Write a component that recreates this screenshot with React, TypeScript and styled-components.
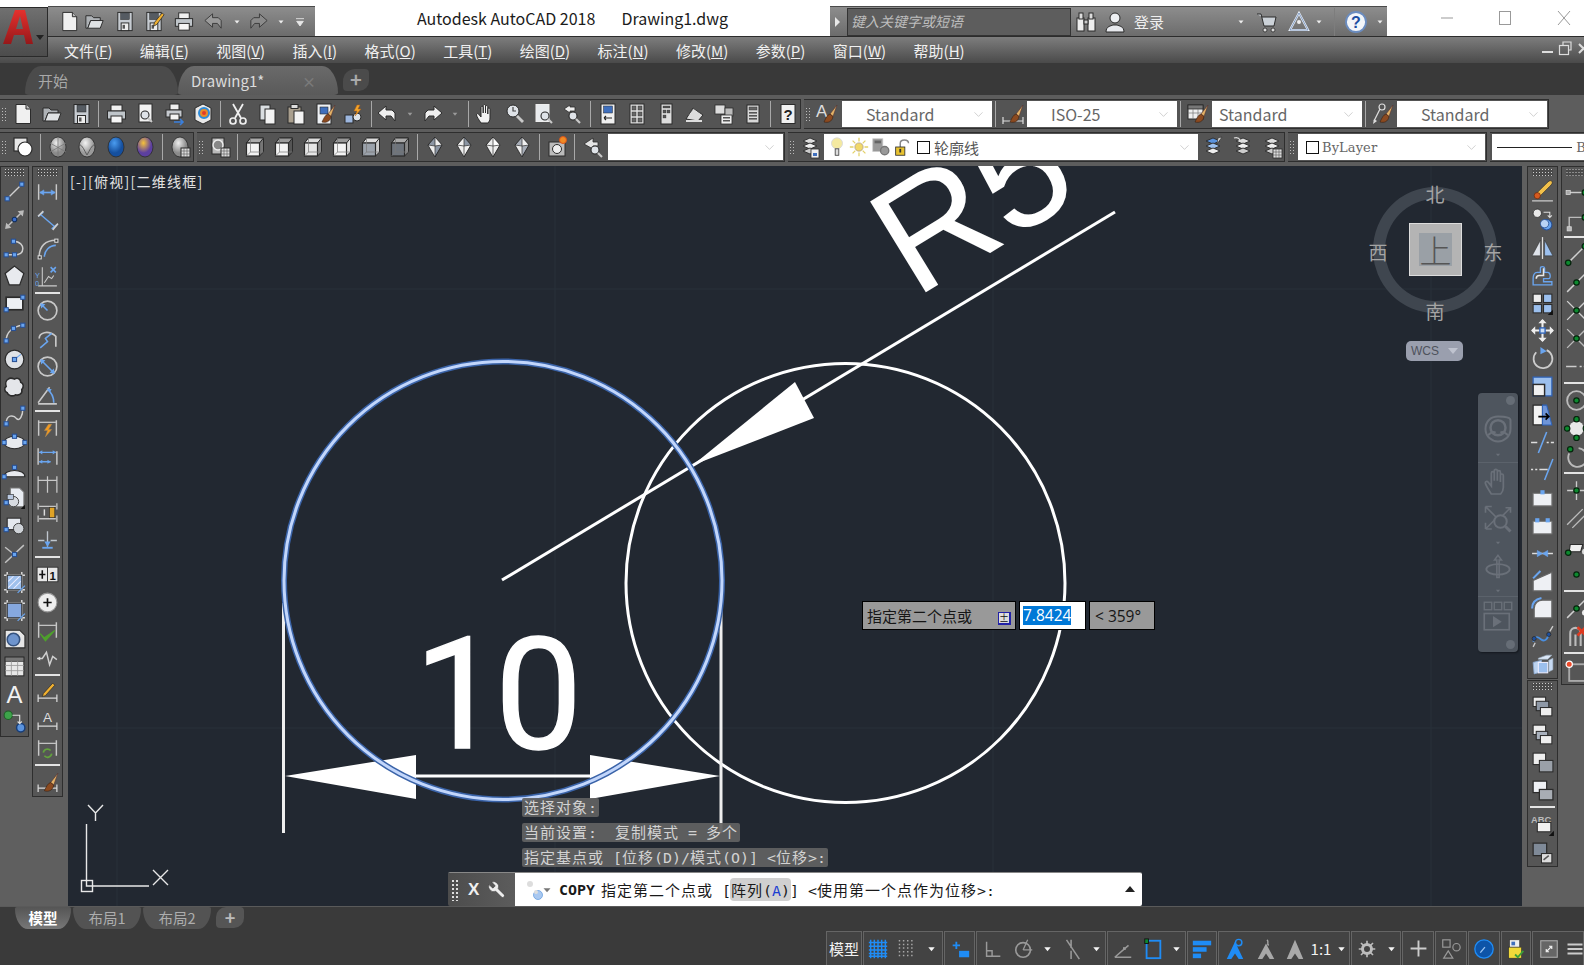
import React from 'react';
import styled, { createGlobalStyle } from 'styled-components';
import { ChevronDown } from 'lucide-react';

const Global = createGlobalStyle`
  html, body { margin: 0; padding: 0; background: #3a3a3a; }
  * { box-sizing: border-box; }
  body { font-family: "Noto Sans CJK SC", "Noto Sans", sans-serif; }
`;

const W = '#e8e8e8', G = '#b9b9b9', K = '#2b2b2b', B = '#6aa5ef', BD = '#2f63b8', S = '#1f8cf5';
const p = (d: string, f = 'none', s = W, w = 1.5) => <path d={d} fill={f} stroke={s} strokeWidth={w} />;
const c = (x: number, y: number, r: number, f = 'none', s = W, w = 1.5) => <circle cx={x} cy={y} r={r} fill={f} stroke={s} strokeWidth={w} />;
const r = (x: number, y: number, wd: number, h: number, f = 'none', s = W, w = 1) => <rect x={x} y={y} width={wd} height={h} fill={f} stroke={s} strokeWidth={w} />;
const n = (x: number, y: number) => r(x - 2, y - 2, 4, 4, B, '#274f94', 1);
const sn = (x: number, y: number) => c(x, y, 2.6, '#0c8a2e', '#06240d', 1.2);
const brush = <>{p('M22 3l-7 9 3 2.5z', '#e3b267', '#533', .6)}{p('M15 12c-3 1-4 4-6 8 4 1 8 0 9-5.5z', '#8b4a20', '#3a2010', .6)}</>;
const page = (x = 5, y = 3, wd = 14, h = 18) => r(x, y, wd, h, '#f1f1f1', K, 1);
const glass = (x: number, y: number) => <>{c(x, y, 4, '#dfe3e8', K, 1.1)}{p(`M${x + 3} ${y + 3}l4 4`, 'none', '#c9c9c9', 2.2)}</>;
const floppy = <>{r(5, 2.5, 15, 19, '#c7ccd2', K, 1)}{r(8, 3, 9, 7, '#555b62', K, .5)}{r(8.5, 13.5, 8, 8, '#ededed', K, 1)}{r(10, 15.5, 2.5, 4, '#555', 'none', 0)}</>;
const printer = <>{r(7, 3, 11, 6, '#f0f0f0', K, 1)}{r(3.5, 9, 18, 8, '#bfc5ca', K, 1)}{r(7, 14, 11, 7, '#f6f6f6', K, 1)}</>;
const stack = <>{p('M5 6l7-3 7 3-7 3z', '#ddd', K, .9)}{p('M5 11l7-3 7 3-7 3z', '#eee', K, .9)}{p('M5 16l7-3 7 3-7 3z', '#ccc', K, .9)}</>;
const cube = (front: string, side: string, top: string) => <>{p('M3.5 8l4-5h13v14l-4 4z', side, K, 1)}{p('M3.5 8l4-5h13l-4 5z', top, K, 1)}{r(3.5, 8, 13, 13, front, K, 1.2)}{p('M7.5 3v14h13M3.5 21l4-4', 'none', '#777', .7)}</>;
const dia = (a: string, b: string) => <>{p('M12 2l7 8-7 12-7-12z', a, K, 1)}{p('M12 2v9l7-1z', b, K, .7)}{p('M5 10l7 1v11z', b === a ? '#aaa' : '#eee', K, .7)}</>;
const sph = (a: string, b: string) => <><radialGradient id={`s${a.slice(1)}`} cx=".4" cy=".3"><stop offset="0" stopColor={a} /><stop offset="1" stopColor={b} /></radialGradient><ellipse cx="12" cy="12" rx="8" ry="10" fill={`url(#s${a.slice(1)})`} stroke={K} strokeWidth=".8" /></>;
const dExt = p('M3.5 4v15M20.5 4v15', 'none', '#c8c8c8', 1.4);
const dLine = <>{p('M5 12h14', 'none', B, 1.6)}{p('M4.5 12l4-2.5v5zM19.5 12l-4-2.5v5z', B, B, .5)}</>;
const dimBase = p('M3 14v7M21 14v7M3 17.5h18', 'none', '#d8d8d8', 1.2);
const hand = <>{p('M7 21c-2-3-4-6-4.5-8-.3-1.3 1.3-2 2.2-.8L7 15V5.5c0-1.6 2.2-1.6 2.2 0V11V3.7c0-1.6 2.3-1.6 2.3 0V11V4.7c0-1.6 2.3-1.6 2.3 0V12V7.2c0-1.6 2.2-1.6 2.2 0V16c0 2-1 4-2 5z', '#f2f2f2', K, 1)}</>;
const snapLine = p('M3 21L21 3', 'none', '#d0d0d0', 1.4);
const snapX = p('M3 3l18 18M3 21L21 3', 'none', '#d0d0d0', 1.3);

const I: Record<string, React.ReactElement> = {
  new: <>{p('M5 2.5h10l4.5 4.5v14.5H5z', '#f0f0f0', K, 1)}{p('M15 2.5V7h4.5', '#bbb', K, 1)}</>,
  open: <>{p('M3 6h6l2 2h7v3H8l-3 8H3z', '#aeb2b6', K, 1)}{p('M8 11h13l-3 8H5z', '#dfe2e4', K, 1)}</>,
  save: floppy,
  saveas: <>{floppy}{p('M21 3l-8 10-1 4 3.5-2 7.5-10z', '#f0b030', K, .8)}</>,
  print: printer,
  preview: <>{page(6, 2, 13, 18)}{glass(12, 13)}</>,
  plot: <>{r(8, 2, 9, 6, '#eee', K, 1)}{r(4, 8, 16, 7, '#c5c9ce', K, 1)}{r(8, 12, 9, 6, '#f4f4f4', K, 1)}{p('M12 20h9M18 17l3 3-3 3', 'none', '#3a7fdc', 1.6)}</>,
  pub3d: <>{p('M12 2l8 4v12l-8 4-8-4V6z', '#e8e8e8', K, 1)}{c(13, 11, 5, '#e88a2a', '#2d8bd9', 2)}{c(13, 11, 2, '#e23b2a', 'none', 0)}</>,
  cut: <>{p('M7 2l8 14M17 2L9 16', 'none', '#f0f0f0', 1.8)}{c(7, 19, 3, 'none', '#eee', 1.7)}{c(17, 19, 3, 'none', '#eee', 1.7)}</>,
  copy: <>{r(5, 3, 10, 15, '#d9dde0', K, 1)}{r(10, 7, 10, 15, '#f3f3f3', K, 1)}</>,
  paste: <>{r(4, 5, 13, 16, '#a99f8e', K, 1)}{r(7, 2.5, 7, 4, '#ddd', K, 1)}{r(10, 9, 10, 13, '#f3f3f3', K, 1)}</>,
  match: <>{r(4, 2, 14, 20, '#eef1f5', K, 1)}{r(7, 5, 8, 7, '#3f6fbd', K, .6)}{brush}</>,
  block: <>{r(3, 13, 8, 8, '#9db7df', K, 1)}{c(15, 15, 4, '#dfe3e8', K, 1)}{p('M15 3l-3 6h3l-2 5 6-7h-3l2-4z', '#f4a52a', '#b25f10', .5)}</>,
  undo: <>{p('M11 4L3 11l8 7v-4h5l4 5v-8l-3-3h-6z', '#eee', K, 1)}</>,
  redo: <>{p('M13 4l8 7-8 7v-4H8l-4 5v-8l3-3h6z', '#eee', K, 1)}</>,
  undod: <>{p('M11 4L3 11l8 7v-4h5l4 5v-8l-3-3h-6z', '#9a9a9a', '#3b3b3b', 1)}</>,
  redod: <>{p('M13 4l8 7-8 7v-4H8l-4 5v-8l3-3h6z', '#8a8a8a', '#3b3b3b', 1)}</>,
  dd: <>{p('M8 10h8l-4 5z', '#9a9a9a', 'none', 0)}</>,
  ddl: <>{p('M7 9h10l-5 6z', '#eeeeee', 'none', 0)}</>,
  ddk: <>{p('M6 9h12l-6 7z', '#777', 'none', 0)}</>,
  ddw: <>{p('M5 9h14l-7 9z', '#f5f5f5', 'none', 0)}</>,
  qmenu: <>{p('M6 7h12M7 11h10l-5 7z', '#e8e8e8', '#e8e8e8', 1.3)}</>,
  hand,
  zrt: <>{c(10, 9, 6, '#dfe3e8', K, 1)}{p('M10 5v4h3', 'none', '#444', 1.2)}{p('M14 14l6 6', 'none', '#c9c9c9', 2.8)}</>,
  zwin: <>{r(4, 2.5, 13, 17, '#e8ebee', '#eee', 1)}{glass(13, 14)}</>,
  zprev: <>{p('M9 3L3 7l6 4V9h5V5H9z', '#eee', K, .8)}{glass(12, 14)}</>,
  palette: <>{r(5, 2, 14, 20, '#f0f0f0', K, 1)}{r(7.5, 4, 9, 7, '#3f6fbd', K, .5)}{p('M8 16h8M8 16l2-2M8 16l2 2', 'none', '#222', 1.1)}</>,
  dc: <>{r(5, 2, 14, 20, '#ddd', K, 1)}{r(7, 4, 4, 4, '#666', K, .4)}{r(13, 4, 4, 4, '#666', K, .4)}{r(7, 10, 4, 4, '#666', K, .4)}{r(13, 10, 4, 4, '#666', K, .4)}{r(7, 16, 4, 4, '#666', K, .4)}{r(13, 16, 4, 4, '#666', K, .4)}</>,
  tp: <>{r(7, 2, 11, 20, '#ddd', K, 1)}{r(9, 4, 7, 2, '#555', K, .3)}{r(9, 8, 3, 3, '#555', K, .3)}{r(9, 13, 3, 3, '#555', K, .3)}{r(13, 8, 3, 3, '#555', K, .3)}</>,
  sheet: <>{p('M3 17l7-11 10 7-5 6z', '#ddd', K, 1)}{p('M5 13l6-7 6 5', 'none', '#555', .8)}{p('M3 19h16', 'none', '#ddd', 2)}</>,
  markup: <>{r(3, 3, 10, 9, '#ddd', K, .8)}{r(13, 6, 8, 8, '#bbb', K, .8)}{r(9, 13, 11, 9, '#eee', K, .8)}{r(11, 15, 7, 1.5, '#555', 'none', 0)}{r(11, 18, 7, 1.5, '#555', 'none', 0)}</>,
  calc: <>{r(6, 3, 12, 18, '#d8d8d8', K, 1)}{r(8, 5, 8, 3, '#666', K, .4)}{r(8, 10, 8, 1.6, '#555', 'none', 0)}{r(8, 13, 8, 1.6, '#555', 'none', 0)}{r(8, 16, 8, 1.6, '#555', 'none', 0)}</>,
  help: <>{r(5, 2.5, 14, 19, '#f0f0f0', K, 1)}<text x="12" y="18" textAnchor="middle" fontFamily="Liberation Sans" fontWeight="700" fontSize="15" fill="#222">?</text></>,
  area: <>{r(3, 3, 13, 13, '#e8e8e8', K, 1.2)}{c(14, 14, 7, '#fff', K, 1.2)}</>,
  hide: <>{sph('#eeeeee', '#8a8a8a')}{p('M4 8l16 9M20 8L4 17M12 2v20', 'none', '#777', .8)}</>,
  shade: <>{sph('#f2f2f2', '#9a9a9a')}{p('M4 9c4 2 5 6 8 11M20 9c-4 2-5 6-8 11', 'none', '#555', .9)}</>,
  sblue: sph('#4a9cf0', '#154f9e'),
  sgold: <>{sph('#f6c23a', '#5c3fa0')}</>,
  smat: <>{sph('#eeeeee', '#777777')}{r(13, 13, 9, 9, '#ddd', K, 1)}{p('M13 16h9M13 19h9M16 13v9M19 13v9', 'none', '#555', .6)}</>,
  vmat: <>{r(4, 3, 12, 16, '#bbb', K, 1)}{c(10, 10, 5, '#888', '#eee', 1.4)}{r(13, 13, 9, 9, '#ddd', K, 1)}{p('M13 16h9M13 19h9M16 13v9M19 13v9', 'none', '#555', .6)}</>,
  c1: cube('#f3f3f3', '#777', '#aaa'),
  c2: cube('#f3f3f3', '#555', '#999'),
  c3: cube('#e6e6e6', '#888', '#ddd'),
  c4: cube('#f3f3f3', '#ddd', '#999'),
  c5: cube('#9ba2ab', '#ccc', '#ddd'),
  c6: cube('#6e747c', '#888', '#aaa'),
  d1: dia('#8b95a3', '#eeeeee'),
  d2: dia('#f0f0f0', '#8b95a3'),
  d3: dia('#eeeeee', '#ffffff'),
  d4: dia('#a8aeb8', '#f0f0f0'),
  cam: <>{r(4, 7, 16, 14, '#bbb', K, 1)}{c(12, 14, 4.5, '#eee', K, 1)}{c(18, 5, 3.5, '#f08a24', '#d9541a', 1)}</>,
  prevv: <>{p('M12 3L3 9l9 5v-3h5V7h-5z', '#e4e4e4', K, .8)}{glass(14, 15)}</>,
  styA: <><text x="1" y="15" fontFamily="Liberation Sans" fontSize="17" fill="#ddd">A</text>{brush}</>,
  styD: <>{p('M2 15v7M22 15v7M2 19h20', 'none', '#ddd', 1.2)}{brush}</>,
  styT: <>{r(2, 3, 15, 14, '#eee', K, 1)}{r(2, 3, 15, 4, '#777', K, .8)}{p('M2 11h15M7 7v10M12 7v10', 'none', '#777', .7)}{brush}</>,
  styM: <>{c(11, 5, 3, 'none', '#ddd', 1.2)}{p('M9 7L3 19', 'none', '#ddd', 1.3)}{p('M2 22l1-5 3 2z', '#ddd', 'none', 0)}{brush}</>,
  layP: <>{stack}{r(13, 14, 8, 9, '#eee', K, .8)}{r(15, 18, 4, 3, '#3f6fbd', 'none', 0)}</>,
  layC: <>{p('M5 6l7-3 7 3-7 3z', '#5b93dd', K, .9)}{p('M5 11l7-3 7 3-7 3z', '#9cc0ee', K, .9)}{p('M5 16l7-3 7 3-7 3z', '#eee', K, .9)}{p('M17 3l4-1-5 7z', '#ddd', K, .6)}</>,
  layU: <>{stack}{p('M3 3c3-1 5 0 6 2', 'none', '#ddd', 1.3)}</>,
  layS: <>{stack}{r(13, 14, 9, 9, '#ddd', K, .8)}{p('M13 17h9M13 20h9M16 14v9M19 14v9', 'none', '#555', .6)}</>,
  bulb: <>{c(12, 8, 6, '#f4e9a0', '#d8d8d8', 1)}{r(10, 14, 4, 7, '#ddd', K, .8)}</>,
  sun: <>{c(12, 12, 4.5, '#f1d86a', '#a98', .8)}{p('M12 2v4M12 18v4M2 12h4M18 12h4M5 5l3 3M16 16l3 3M19 5l-3 3M8 16l-3 3', 'none', '#e4d26a', 1.4)}</>,
  vpf: <>{r(3, 3, 11, 14, '#999', '#ccc', .8)}{r(5, 5, 7, 3, '#666', 'none', 0)}{c(16, 16, 4.5, '#999', '#777', 1.5)}</>,
  lock: <>{p('M9 12V8c0-5 9-5 9 0', 'none', '#888', 1.6)}{r(4, 12, 10, 9, '#e8c230', K, .9)}{r(8, 14, 2, 4, '#333', 'none', 0)}</>,
  line: <>{p('M5 19L19 5', 'none', '#d0d0d0', 1.3)}{n(5, 19)}{n(19, 5)}</>,
  xline: <>{p('M4 20L20 4', 'none', '#c2c2c2', 1.4)}{p('M3 21l1-6 5 5zM21 3l-6 1 5 5z', '#bbb', 'none', 0)}{c(12, 12, 2.2, '#3c6fd0', '#12305f', 1)}</>,
  pline: <>{p('M4 19h8c7 0 8-4 8-6s-2-7-9-7', 'none', '#d0d0d0', 1.4)}{n(4, 19)}{n(12, 19)}{n(11, 6)}</>,
  polygon: <>{p('M12 3l9 7-4 11H7L3 10z', '#e8eaee', K, 1.2)}</>,
  rect: <>{r(4, 6, 16, 12, '#eef0f4', K, 1.6)}{n(4, 18)}{n(20, 6)}</>,
  arc: <>{p('M4 21c0-9 7-14 16-15', 'none', '#d0d0d0', 1.4)}{n(4, 21)}{n(11, 9)}{n(20, 6)}</>,
  circle: <>{c(12, 12, 9, '#dfe2e6', K, 1.2)}{p('M12 12l6-5', 'none', B, 1)}{n(12, 12)}</>,
  cloud: <>{p('M6 4c2-2 4-1 6 0 3-2 6 0 6 3 3 1 3 5 1 7 1 4-3 6-6 5-3 2-7 1-8-2-3-1-3-5-1-6-1-3 0-6 2-7z', '#e4e6ea', K, 1.5)}</>,
  spline: <>{p('M4 20c0-9 7-9 10-5 3 3 6-3 6-10', 'none', '#d0d0d0', 1.4)}{n(4, 20)}{n(20, 5)}</>,
  ell: <><ellipse cx="12" cy="12" rx="10" ry="6" fill="#e8eaee" stroke={K} />{n(2, 12)}{n(22, 12)}{n(12, 6)}</>,
  ella: <><path d="M2 18c0-8 20-8 20 0z" fill="#e8eaee" stroke={K} />{n(2, 18)}{n(12, 9)}</>,
  ins: <>{p('M8 2h9l4 4v14H8z', '#e8ecf2', '#777', 1)}{c(11, 15, 5, '#d8dce2', K, .8)}{r(5, 8, 6, 5, '#b9c8e0', K, .6)}{n(4, 16)}{p('M18 22l4-4v4z', '#111', 'none', 0)}</>,
  mkblk: <>{r(5, 4, 13, 11, '#e4e8ee', K, 1)}{c(16, 14, 5, '#cfd3d8', K, .8)}{n(4, 15)}</>,
  point: <>{p('M3 20L21 3M3 5l10 8', 'none', '#c2c2c2', 1.4)}{n(12, 12)}</>,
  hatch: <>{p('M2 5h20M2 19h20M5 2v20M19 2v20', 'none', '#ddd', 1.4)}{r(5, 5, 14, 14, '#9fc0ec', K, 1)}{p('M6 11l5-5M6 17l11-11M11 18l7-7', 'none', '#eef', 1)}{p('M15 22l7-7', 'none', B, 1.2)}</>,
  grad: <>{p('M2 5h20M2 19h20M5 2v20M19 2v20', 'none', '#ddd', 1.4)}{r(5, 5, 14, 14, '#86a8de', K, 1)}{p('M15 22l7-7', 'none', B, 1.2)}</>,
  region: <>{p('M3 4h14l5 5v12H3z', '#e6e6e6', K, 1)}{c(11, 13, 6, '#6e94cd', '#35527e', 1.5)}</>,
  table: <>{r(3, 3, 18, 18, '#e8e8e8', K, 1)}{r(3, 3, 18, 4, '#777', K, .7)}{p('M3 11h18M3 16h18M9 7v14M15 7v14', 'none', '#999', .8)}</>,
  textA: <><text x="12" y="21" textAnchor="middle" fontFamily="Liberation Sans" fontSize="23" fill="#f2f2f2">A</text></>,
  addsel: <>{c(6, 6, 4, '#3da34a', '#1e5c26', 1)}{c(18, 18, 4, '#5b93dd', '#173d78', 1.4)}{p('M10 6h7v8M15 12l2 2 2-2', 'none', '#ddd', 1.1)}</>,
  dlin: <>{dExt}{dLine}</>,
  dali: <>{p('M8 4L3 8M21 16l-5 4M5 6l14 12', 'none', B, 1.4)}{p('M8 3l-5 5M22 15l-5 6', 'none', '#d0d0d0', 1.5)}</>,
  darc: <>{p('M4 20C4 10 10 4 20 4', 'none', '#c8c8c8', 1.5)}{p('M9 20c0-6 5-11 11-11', 'none', B, 1.5)}{r(3, 19, 3, 3, '#333', '#ddd', 1)}{r(19, 3, 3, 3, '#333', '#ddd', 1)}</>,
  dord: <>{p('M3 21h18M7 3v18', 'none', '#ccc', 1)}{p('M9 18l4-6 3 2 2-3', 'none', '#ccc', 1)}{p('M15 3l5 5M20 3l-5 5', 'none', B, 1.5)}<text x="0" y="13" fontFamily="Liberation Sans" fontSize="7" fill={B}>Y</text><text x="0" y="21" fontFamily="Liberation Sans" fontSize="7" fill={B}>0</text></>,
  drad: <>{c(12, 12, 9, 'none', '#c8c8c8', 1.6)}{p('M12 12L7 7', 'none', B, 1.5)}{p('M5 5l5 1-4 4z', B, 'none', 0)}</>,
  djog: <>{p('M4 12c0-5 8-9 16-2v10', 'none', '#c8c8c8', 1.6)}{p('M5 21l7-6-2-3 6-5', 'none', B, 1.5)}</>,
  ddia: <>{c(12, 12, 9, 'none', '#c8c8c8', 1.6)}{p('M6 6l12 12', 'none', B, 1.5)}{p('M5 5l5 1-4 4zM19 19l-5-1 4-4z', B, 'none', 0)}</>,
  dang: <>{p('M3 21h18M3 20L14 5', 'none', '#c8c8c8', 1.5)}{p('M12 7c4 3 6 8 6 13', 'none', B, 1.5)}{p('M11 6l5 1-2 3z', B, 'none', 0)}</>,
  dqk: <>{dExt}{p('M4 6h16', 'none', '#ddd', 1)}{p('M13 8l-4 6h3l-2 6 6-7h-3l3-5z', '#f39a1e', '#a85', .5)}</>,
  dbase: <>{p('M3 4v16M21 7v13', 'none', '#c8c8c8', 1.4)}{p('M4 8h16M4 17h11', 'none', B, 1.3)}{p('M4 8l3-2v4zM20 8l-3-2v4zM4 17l3-2v4zM15 17l-3-2v4z', B, 'none', 0)}</>,
  dcont: <>{p('M3 4v16M12 4v16M21 4v16M3 8h18', 'none', '#c8c8c8', 1.2)}</>,
  dspace: <>{p('M3 3v6M21 3v6M3 15v6M21 15v6M4 6h16M4 18h16', 'none', '#c8c8c8', 1.2)}{r(14, 7, 5, 10, '#e0a326', K, .6)}{p('M9 9v6', 'none', '#ddd', 1.4)}</>,
  dbrk: <>{p('M12 3v15M3 12h6M15 12h6', 'none', '#bfc6ce', 1.3)}{p('M7 19h10', 'none', B, 1.8)}{p('M12 18l-3-5h6z', B, 'none', 0)}</>,
  dtol: <>{r(2, 5, 20, 14, '#e6e6e6', K, .8)}{p('M12 5v14', 'none', '#333', 1)}{p('M7 8v8M4 12h6', 'none', '#111', 1.5)}<text x="14" y="17" fontFamily="Liberation Sans" fontSize="11" fontWeight="700" fill="#111">1</text></>,
  dcen: <>{c(12, 12, 9, '#eeeeee', '#999', 1)}{p('M12 8v8M8 12h8', 'none', '#111', 1.6)}</>,
  dchk: <>{dExt}{p('M4 7h16', 'none', '#ddd', 1)}{p('M5 15l4 4 10-7-9 10z', '#4ea12b', '#4ea12b', 1)}</>,
  djl: <>{p('M2 12h5l4-6 3 12 3-8 4 3', 'none', '#cfcfcf', 1.4)}{p('M2 12l3-2v4z', '#ddd', 'none', 0)}</>,
  dedit: <>{dimBase}{p('M8 13l-1 3 3-1 9-10-2-2z', '#f0b030', K, .7)}</>,
  dtxt: <>{dimBase}<text x="12" y="13" textAnchor="middle" fontFamily="Liberation Sans" fontSize="13" fill="#ddd">A</text></>,
  dup: <>{dExt}{p('M4 7h16', 'none', '#ddd', 1)}{p('M8 16a4 4 0 0 1 7-2M16 17a4 4 0 0 1-7 2', 'none', '#63a33d', 1.6)}</>,
  dsty: <>{dimBase}{brush}</>,
  erase: <>{p('M21 2c1 2 0 3-2 5L10 16l-3-3 9-9c2-2 3-3 5-2z', '#f2c04a', K, .6)}{c(7, 16, 3, '#d65a1f', '#5a2208', .6)}{p('M2 21h20', 'none', '#ccc', 1.2)}</>,
  cpy: <>{c(7, 6, 4, '#e8e8e8', K, .8)}{c(16, 17, 5, B, '#274f94', 1)}{c(14, 16, 4, '#b9d3f5', '#274f94', .8)}{p('M13 5h6v5M17 8l2 2 2-2', 'none', '#ddd', 1)}</>,
  mir: <>{p('M10 5v15H2z', '#dfe3ea', K, .5)}{p('M14 5v15h8z', '#9cc0ee', K, .5)}{p('M12 2v21', 'none', '#ddd', 1.2)}</>,
  off: <>{p('M3 21h18v-3H13v-3h5c2 0 2-6-1-6h-3V5c0-2-4-2-4 0v4H7c-3 0-4 3-4 6z', 'none', '#6aa5ef', 1.3)}{p('M6 15c0-2 1-3 3-3h4V5', 'none', '#e8e8e8', 1.5)}</>,
  arr: <>{r(3, 3, 8, 8, '#eee', K, 1)}{r(13, 3, 8, 8, '#9cc0ee', K, 1)}{r(3, 13, 8, 8, '#9cc0ee', K, 1)}{r(13, 13, 8, 8, '#9cc0ee', K, 1)}{p('M17 23l5-5v5z', '#111', 'none', 0)}</>,
  move: <>{p('M12 2v20M2 12h20', 'none', '#eee', 2)}{p('M12 1l4 4H8zM12 23l4-4H8zM1 12l4-4v8zM23 12l-4-4v8z', '#eee', 'none', 0)}{r(9.5, 9.5, 5, 5, '#cfe0f5', BD, 1.3)}</>,
  rot: <>{p('M16 4A9 9 0 1 1 6 6', 'none', '#ccc', 1.7)}{p('M10 1l6 4-6 3z', B, 'none', 0)}</>,
  scl: <>{r(3, 3, 18, 18, '#9cc0ee', BD, 1.2)}{r(3, 10, 11, 11, '#f0f0f0', K, 1.4)}</>,
  stretch: <>{p('M3 3h9v19H3z', '#f2f2f2', K, 1.2)}{p('M12 3h4l5 19h-9z', '#6f95d8', BD, 1)}{p('M8 14h10M15 11l3 3-3 3', 'none', '#000', 1.6)}</>,
  trim: <>{p('M1 12h6M16 12h2M20 12h3', 'none', '#ddd', 1.5)}{p('M8 22l8-20', 'none', B, 1.5)}</>,
  ext: <>{p('M1 12h2M5 12h2M9 12h8', 'none', '#ddd', 1.5)}{p('M14 22l8-20', 'none', B, 1.5)}</>,
  brkp: <>{r(3, 8, 18, 12, '#eef0f4', '#777', 1)}{r(10, 5, 4, 4, B, 'none', 0)}</>,
  brk: <>{r(3, 8, 18, 12, '#eef0f4', '#777', 1)}{r(5, 5, 4, 4, B, 'none', 0)}{r(15, 5, 4, 4, B, 'none', 0)}</>,
  join: <>{p('M2 12h20', 'none', '#ddd', 1.4)}{p('M7 9l5 3-5 3zM17 9l-5 3 5 3z', B, B, .5)}</>,
  chf: <>{p('M21 3v18H3V11z', '#eef0f4', '#666', 1.2)}{p('M3 9L10 2', 'none', B, 2)}</>,
  fil: <>{p('M21 4v17H4v-9c0-5 4-8 8-8z', '#eef0f4', '#666', 1.2)}{p('M2 12c0-6 4-9 9-10', 'none', B, 2)}</>,
  bld: <>{p('M3 17c3-7 5-4 8-2s6 0 7-6', 'none', '#4a8fe0', 1.8)}{c(4, 14, 2, '#1c4fa0', K, .8)}{c(18, 10, 2, '#1c4fa0', K, .8)}{p('M3 22l2-4M19 7l3-5', 'none', '#ccc', 1.3)}</>,
  expl: <>{p('M3 10l8-2v11l-7 2z', '#bcd3f0', '#8aa8d0', .8)}{r(8, 10, 9, 10, '#9cc0ee', '#eef', 1)}{p('M8 6l8-3h5l-4 4H8z', '#dbe7f7', '#9ab', .6)}{p('M18 8l4-2v11l-4 2z', '#c8dbf4', '#9ab', .6)}</>,
  s1: <>{p('M4 12h14', 'none', '#ccc', 1.4)}{r(2, 10, 4, 4, '#aaa', '#ddd', .7)}{sn(20, 12)}</>,
  s2: <>{p('M5 21v-12h13', 'none', '#bbb', 1.4)}{r(3, 18, 4, 4, '#bbb', '#ddd', .7)}{sn(20, 9)}</>,
  s3: <>{snapLine}{sn(4, 20)}{sn(20, 4)}</>,
  s4: <>{snapLine}{sn(12, 12)}</>,
  s5: <>{snapX}{sn(12, 12)}</>,
  s6: <>{p('M3 3l18 18M3 21L21 3', 'none', '#bbb', 1.3)}{sn(12, 12)}</>,
  s7: <>{p('M2 12h10M15 12h2M19 12h3', 'none', '#ccc', 1.5)}</>,
  s8: <>{c(12, 12, 9, 'none', '#bbb', 1.8)}{sn(12, 12)}</>,
  s9: <>{c(12, 12, 7, '#e8e8e8', 'none', 0)}{sn(12, 3)}{sn(3, 12)}{sn(21, 12)}{sn(12, 21)}</>,
  s10: <>{p('M14 4a9 9 0 1 1-9 5', 'none', '#bbb', 1.8)}{sn(6, 5)}</>,
  s11: <>{p('M12 3v18M3 12h18', 'none', '#ccc', 1.3)}{sn(12, 12)}</>,
  s12: <>{p('M3 18L18 3M8 21L21 8', 'none', '#bbb', 1.3)}</>,
  s13: <>{p('M6 10h12l-2 7H5z', '#eee', K, 1)}{sn(4, 18)}{c(20, 17, 2.8, '#ddd', 'none', 0)}</>,
  s14: sn(12, 12),
  s15: <>{snapLine}{sn(12, 12)}{c(20, 16, 2.8, '#eee', 'none', 0)}</>,
  s16: <>{p('M6 21V9c0-7 10-7 10 0v12M11 21V10', 'none', '#bbb', 2)}{p('M13 3l8 8M21 3l-8 8', 'none', '#e03a20', 2.6)}</>,
  s17: <>{r(5, 6, 16, 16, 'none', '#aaa', 1.8)}{c(5, 6, 3, '#ee4a2a', '#fff', 1.2)}</>,
  o1: <>{r(3, 3, 12, 9, '#eee', K, 1)}{r(6, 7, 12, 9, '#8e98a6', K, 1)}{r(10, 13, 11, 8, '#eee', K, 1)}</>,
  o2: <>{r(3, 3, 12, 9, '#eee', K, 1)}{r(6, 9, 11, 8, '#a8b0bc', K, 1)}{r(10, 13, 11, 8, '#eee', K, 1)}</>,
  o3: <>{r(3, 3, 12, 11, '#eee', K, 1)}{r(9, 10, 13, 11, '#9aa0a8', K, 1)}</>,
  o4: <>{r(3, 3, 13, 11, '#eef0f4', K, 1.2)}{r(9, 11, 13, 10, '#a8adb4', K, 1.2)}</>,
  o5: <><text x="1" y="11" fontFamily="Liberation Sans" fontSize="9" fontWeight="700" fill="#bbb">ABC</text>{r(7, 10, 13, 9, '#f0f0f0', K, 1)}{p('M18 23l5-5v5z', '#111', 'none', 0)}</>,
  o6: <>{r(3, 3, 13, 12, '#7f8a98', K, 1.2)}{r(11, 13, 10, 9, '#ddd', K, 1)}{p('M13 19l5-4', 'none', '#555', 1.5)}</>,
  gridS: <>{p('M4 2v20M8 2v20M12 2v20M16 2v20M20 2v20M2 5h20M2 9h20M2 13h20M2 17h20M2 20h20', 'none', S, 1.6)}</>,
  dots: <path d="M3 3h18M3 7h18M3 11h18M3 15h18M3 19h18" fill="none" stroke="#a8a8a8" strokeWidth="1.6" strokeDasharray="1.6 2.9" />,
  inferS: <>{p('M4 8h8M8 4v8', 'none', S, 2)}{r(11, 14, 11, 7, S, 'none', 0)}</>,
  ortho: <>{p('M5 4v16h15M5 14h6v6', 'none', '#999', 1.6)}</>,
  polar: <>{c(11, 13, 8, 'none', '#999', 1.8)}{p('M11 13l5-11M11 13h10', 'none', '#999', 1.4)}</>,
  iso: <>{p('M6 2l14 21M11 2v9M11 14v9', 'none', '#999', 1.7)}</>,
  angle: <>{p('M3 21h18M3 21L18 8', 'none', '#999', 1.7)}{r(12, 10, 3, 3, '#999', 'none', 0)}</>,
  osnap: <>{r(5, 3, 15, 19, 'none', S, 2)}{r(3, 1, 4, 5, '#0c8a2e', '#111', 1)}</>,
  lw: <>{r(2, 3, 20, 5, S, 'none', 0)}{r(2, 10, 15, 5, S, 'none', 0)}{r(2, 17, 9, 5, S, 'none', 0)}</>,
  annoS: <>{p('M12 4L3 23h5l4-6 4 6h5z', S, 'none', 0)}{c(16, 5, 3.5, 'none', S, 1.6)}</>,
  anno: <>{p('M12 6L3 23h5l4-6 4 6h5z', '#a8a8a8', 'none', 0)}{p('M13 2c3 2-1 4 2 6', 'none', '#a8a8a8', 1.5)}</>,
  annoB: <>{p('M12 2L3 23h5l4-6 4 6h5z', '#a8a8a8', 'none', 0)}</>,
  gear: <>{c(12, 12, 6, 'none', '#bdbdbd', 4)}{p('M12 1v5M12 18v5M1 12h5M18 12h5M4 4l4 4M16 16l4 4M20 4l-4 4M8 16l-4 4', 'none', '#bdbdbd', 2.2)}</>,
  plus: <>{p('M12 2v20M2 12h20', 'none', '#ccc', 2.4)}</>,
  shapes: <>{r(3, 2, 8, 8, 'none', '#999', 1.3)}{c(18, 10, 4, 'none', '#999', 1.3)}{p('M9 14l-5 8h10z', 'none', '#999', 1.3)}</>,
  iso2: <>{c(12, 12, 10, '#0d54a8', S, 1.5)}{p('M8 16l5-6', 'none', '#9cc6f5', 1.4)}</>,
  clean: <>{r(5, 2, 11, 8, '#eee', K, .6)}{r(4, 10, 14, 12, '#f0d93a', K, .6)}{r(7, 4, 4, 4, '#3f6fbd', 'none', 0)}{p('M11 18l3 3 6-7', 'none', '#3aa03a', 2)}</>,
  full: <>{r(3, 3, 18, 18, '#666', '#aaa', 1.2)}{p('M9 15l6-6M12 9h3v3M9 12v3h3', 'none', '#eee', 1.3)}</>,
  menu: <>{p('M2 6h20M2 12h20M2 18h20', 'none', '#ccc', 2.6)}</>,
  binoc: <>{r(3, 8, 7, 13, '#eee', K, 1)}{r(14, 8, 7, 13, '#eee', K, 1)}{r(5, 3, 4, 6, '#ddd', K, 1)}{r(15, 3, 4, 6, '#ddd', K, 1)}{r(10, 10, 4, 4, '#ccc', K, 1)}</>,
  user: <>{c(12, 8, 5, '#eef0f3', K, 1)}{p('M3 22c0-6 5-6 7-7h4c2 1 7 1 7 7z', '#e8eaee', K, 1)}</>,
  cart: <>{p('M2 4h4l3 12h10l2-9H7', '#ccd2d8', K, 1)}{c(10, 20, 2, '#ddd', K, .8)}{c(18, 20, 2, '#ddd', K, .8)}</>,
  a360: <>{p('M12 3L3 20h18z', 'none', '#e8f0fa', 2.2)}{p('M12 3L3 20h18z', 'none', '#486a9f', .6)}{c(12, 12, 2, '#eee', 'none', 0)}</>,
  helpC: <>{c(12, 12, 10, '#f3f6fa', '#6a8cc0', 1.8)}<text x="12" y="18" textAnchor="middle" fontFamily="Liberation Sans" fontWeight="700" fontSize="16" fill="#1d4ea2">?</text></>,
  tool: <g transform="translate(24 0) scale(-1 1)"><path d="M14.7 6.3a1 1 0 0 0 0 1.4l1.6 1.6a1 1 0 0 0 1.4 0l3.77-3.77a6 6 0 0 1-7.94 7.94l-6.91 6.91a2.12 2.12 0 0 1-3-3l6.91-6.91a6 6 0 0 1 7.94-7.94l-3.76 3.76z" fill="#ededed" stroke="#333" strokeWidth=".7" /></g>,
  cmdic: <>{c(7, 6, 3, '#ddd', 'none', 0)}{c(15, 17, 4.5, '#a9c8f0', '#6aa0e0', .8)}{c(13, 14, 2, '#ddd', 'none', 0)}</>,
  wheel: <>{p('M12 2c6 0 10 1 10 3v7c0 6-5 10-10 10S2 18 2 12C2 6 6 2 12 2z', 'none', '#6a7079', 1.6)}{c(12, 11, 6, 'none', '#6a7079', 2)}{p('M4 17c3-3 5-3 6-2M20 17c-3-3-5-3-6-2', 'none', '#6a7079', 1.6)}</>,
  handN: <>{p('M7 21c-2-3-4-6-4.5-8-.3-1.3 1.3-2 2.2-.8L7 15V5.5c0-1.6 2.2-1.6 2.2 0V11V3.7c0-1.6 2.3-1.6 2.3 0V11V4.7c0-1.6 2.3-1.6 2.3 0V12V7.2c0-1.6 2.2-1.6 2.2 0V16c0 2-1 4-2 5z', 'none', '#6a7079', 1.3)}</>,
  zoomN: <>{p('M2 2l18 18M9 9L2 2M2 2v5M2 2h5M2 20L11 11M2 20v-5M2 20h5M18 3h4v4M22 3l-7 7', 'none', '#6a7079', 1.3)}{c(14, 14, 5, '#4e555e', '#6a7079', 1.6)}{p('M18 18l4 4', 'none', '#6a7079', 2.4)}</>,
  orbitN: <>{p('M12 2l3 4h-2v15h-2V6H9z', 'none', '#6a7079', 1.3)}<ellipse cx="12" cy="14" rx="10" ry="4.5" fill="none" stroke="#6a7079" strokeWidth="1.6" /></>,
  showN: <>{r(1, 1, 6, 6, 'none', '#6a7079', 1.1)}{r(9, 1, 6, 6, 'none', '#6a7079', 1.1)}{r(17, 1, 6, 6, 'none', '#6a7079', 1.1)}{r(1, 10, 20, 13, 'none', '#6a7079', 1.3)}{p('M8 12l7 4.5-7 4.5z', '#6a7079', 'none', 0)}</>,
  ddN: <>{p('M7 9h10l-5 6z', '#6a7079', 'none', 0)}</>,
};

const Glyph = styled.svg<{ $s: number }>`
  width: ${(q) => q.$s}px;
  height: ${(q) => q.$s}px;
  display: block;
  flex: none;
`;
const Ic = ({ name, s = 24 }: { name: string; s?: number }) => (
  <Glyph $s={s} viewBox="0 0 24 24">{I[name]}</Glyph>
);

const Page = styled.div`
  width: 1584px;
  height: 965px;
  overflow: hidden;
  display: flex;
  flex-direction: column;
  position: relative;
  background: #3a3a3a;
`;
const TitleBar = styled.header`
  height: 37px;
  flex: none;
  background: #fff;
  display: flex;
  align-items: flex-end;
  border-bottom: 1px solid #2c2c2c;
`;
const Strip = styled.div<{ $w: number; $pl: number }>`
  width: ${(q) => q.$w}px;
  margin-left: ${(q) => q.$pl}px;
  height: 30px;
  flex: none;
  display: flex;
  align-items: center;
  background: linear-gradient(#8d8d8d, #6c6c6c);
  border-top: 1px solid #4a4a4a;
`;
const QSlot = styled.div<{ $w: number; $ml?: number }>`
  width: ${(q) => q.$w}px;
  margin-left: ${(q) => q.$ml ?? 0}px;
  height: 28px;
  flex: none;
  display: flex;
  align-items: center;
  justify-content: center;
`;
const Title = styled.div`
  width: 515px;
  height: 37px;
  flex: none;
  padding-left: 102px;
  display: flex;
  gap: 26px;
  align-items: center;
  font-size: 16px;
  color: #1b1b1b;
  white-space: pre;
`;
const SearchBox = styled.div`
  width: 224px;
  height: 28px;
  background: #5d5d5d;
  border: 1px solid #333;
  margin-left: 7px;
  font-size: 14px;
  font-style: italic;
  color: #bdbdbd;
  line-height: 25px;
  padding-left: 3px;
  flex: none;
`;
const ArrowR = styled.div`
  width: 0;
  height: 0;
  margin-left: 5px;
  border-left: 5px solid #e8e8e8;
  border-top: 5px solid transparent;
  border-bottom: 5px solid transparent;
  flex: none;
`;
const Login = styled.span`
  font-size: 15px;
  color: #eee;
  width: 100px;
  flex: none;
  margin-left: 4px;
`;
const VLine = styled.div`
  width: 1px;
  height: 28px;
  margin-left: 8px;
  background: #7d7d7d;
  flex: none;
`;
const WinBtns = styled.div`
  height: 37px;
  display: flex;
  flex: 1;
  padding-left: 54px;
  gap: 46px;
  align-items: center;
  color: #888;
`;
const AppBtn = styled.div`
  position: absolute;
  left: 0;
  top: 7px;
  width: 48px;
  height: 50px;
  background: linear-gradient(#707070, #4c4c4c);
  border: 1px solid #2a2a2a;
  border-left: 0;
  z-index: 5;
`;
const MenuBar = styled.nav`
  height: 26px;
  flex: none;
  background: linear-gradient(#7d7d7d, #4a4a4a);
  display: flex;
  align-items: center;
  padding-left: 64px;
  gap: 27.4px;
  font-size: 15px;
  color: #f0f0f0;
  position: relative;
  white-space: nowrap;
`;
const Under = styled.span`
  text-decoration: underline;
  text-underline-offset: 1px;
`;
const MdiBtns = styled.div`
  position: absolute;
  right: -6px;
  top: 3px;
  display: flex;
  gap: 4px;
  align-items: center;
`;
const TabsBar = styled.div`
  height: 32px;
  flex: none;
  background: #393939;
  display: flex;
  align-items: flex-end;
  padding-left: 25px;
`;
const DocTab = styled.div<{ $w: number; $on?: boolean }>`
  width: ${(q) => q.$w}px;
  height: 29px;
  flex: none;
  border-radius: 16px 16px 6px 6px / 27px 27px 2px 2px;
  background: ${(q) => (q.$on ? 'linear-gradient(#6a6a6a,#5a5a5a)' : '#4b4b4b')};
  color: ${(q) => (q.$on ? '#dcdcdc' : '#a8a8a8')};
  font-size: 15px;
  padding-left: 13px;
  display: flex;
  align-items: center;
  justify-content: space-between;
  padding-right: 22px;
`;
const CloseX = styled.span`
  color: #7a7a7a;
  font-size: 14px;
  font-weight: 700;
`;
const AddTab = styled.div`
  width: 26px;
  height: 22px;
  margin: 0 0 4px 5px;
  border-radius: 12px 4px 10px 4px;
  background: #4b4b4b;
  color: #aaa;
  font-size: 20px;
  font-weight: 700;
  line-height: 20px;
  text-align: center;
`;
const BarRow = styled.div<{ $h: number; $pt: number }>`
  height: ${(q) => q.$h}px;
  padding-top: ${(q) => q.$pt}px;
  flex: none;
  background: #5d5d5d;
  display: flex;
  gap: 3px;
  overflow: hidden;
`;
const HBar = styled.div<{ $w?: number; $h: number }>`
  ${(q) => (q.$w ? `width: ${q.$w}px;` : '')}
  height: ${(q) => q.$h}px;
  flex: none;
  display: flex;
  align-items: center;
  background: #545454;
  border: 1px solid #2e2e2e;
  border-left: 0;
`;
const HGrip = styled.div`
  width: 7px;
  height: 14px;
  margin-left: 1px;
  flex: none;
  background-image: radial-gradient(#bbb 0.7px, transparent 0.8px);
  background-size: 3px 3px;
`;
const Cell = styled.div<{ $w: number }>`
  width: ${(q) => q.$w}px;
  height: 27px;
  flex: none;
  display: flex;
  align-items: center;
  justify-content: center;
`;
const HSep = styled.div`
  width: 1px;
  height: 26px;
  margin: 0 2.5px;
  flex: none;
  background: #a8a8a8;
`;
const Combo = styled.div<{ $w: number; $pl: number; $mono?: boolean; $fs?: number }>`
  width: ${(q) => q.$w}px;
  height: calc(100% - 2px);
  padding-left: ${(q) => q.$pl}px;
  padding-right: 6px;
  flex: none;
  background: #fff;
  display: flex;
  align-items: center;
  color: #666;
  font-size: ${(q) => q.$fs ?? 16}px;
  font-family: ${(q) => (q.$mono ? '"DejaVu Serif", serif' : 'inherit')};
  > svg:last-child { margin-left: auto; }
`;
const LayerName = styled.span`
  font-size: 15px;
  color: #555;
  margin-left: 1px;
`;
const Swatch = styled.span`
  width: 13px;
  height: 13px;
  border: 1px solid #111;
  background: #fff;
  flex: none;
  margin: 0 3px;
`;
const LineSample = styled.span`
  width: 75px;
  height: 1px;
  background: #222;
  flex: none;
  margin-left: 5px;
`;
const Mono = styled.span`
  font-size: 13px;
  letter-spacing: .1px;
  white-space: pre;
`;
const Main = styled.main`
  flex: 1;
  min-height: 0;
  display: grid;
  grid-template-columns: 68px 1fr 62px;
`;
const Dock = styled.aside<{ $pl: number }>`
  background: #5f5f5f;
  display: flex;
  align-items: flex-start;
  gap: 3px;
  padding-left: ${(q) => q.$pl}px;
  overflow: hidden;
`;
const VStack = styled.div`
  display: flex;
  flex-direction: column;
  gap: 1px;
  flex: none;
`;
const VBar = styled.div<{ $w: number; $ch: number }>`
  width: ${(q) => q.$w}px;
  flex: none;
  display: flex;
  flex-direction: column;
  align-items: center;
  border: 1px solid #2e2e2e;
  background: #565656;
  --ch: ${(q) => q.$ch}px;
`;
const VGrip = styled.div`
  width: 100%;
  height: 11px;
  flex: none;
  background-color: #4a4a4a;
  background-image: radial-gradient(#ccc 0.7px, transparent 0.8px);
  background-size: 3px 3px;
  background-position: center;
  background-clip: content-box;
  padding: 2px 4px;
`;
const VCell = styled.div`
  width: 100%;
  height: var(--ch);
  flex: none;
  display: flex;
  align-items: center;
  justify-content: center;
`;
const VSep = styled.div`
  width: 25px;
  height: 2px;
  margin: 2px 0;
  flex: none;
  background: #e4e4e4;
`;
const Canvas = styled.section`
  position: relative;
  background: #222831;
  overflow: hidden;
`;
const Drawing = styled.svg`
  position: absolute;
  left: 0;
  top: 0;
  width: 100%;
  height: 100%;
`;
const ViewLabel = styled.div`
  position: absolute;
  left: 2px;
  top: 5px;
  color: #e2e2e2;
  font-size: 14px;
  letter-spacing: 1.25px;
  white-space: pre;
`;
const Cube = styled.div`
  position: absolute;
  left: 1290px;
  top: 15px;
  width: 170px;
  height: 190px;
`;
const Ring = styled.div`
  position: absolute;
  left: 15px;
  top: 6px;
  width: 124px;
  height: 126px;
  border: 12px solid #3f464f;
  border-radius: 50%;
`;
const Face = styled.div`
  position: absolute;
  left: 51px;
  top: 42px;
  width: 53px;
  height: 53px;
  background: #b4b4b4;
  border: 1px solid #ddd;
  padding: 9px;
`;
const FaceIn = styled.div`
  width: 100%;
  height: 100%;
  background: #9aa0a6;
  color: #555;
  font-size: 32px;
  line-height: 32px;
  text-align: center;
  font-weight: 300;
`;
const Compass = styled.span<{ $x: number; $y: number }>`
  position: absolute;
  left: ${(q) => q.$x}px;
  top: ${(q) => q.$y}px;
  transform: translate(-50%, -50%);
  color: #a4a4a4;
  font-size: 19px;
`;
const Wcs = styled.div`
  position: absolute;
  left: 48px;
  top: 160px;
  width: 57px;
  height: 20px;
  background: #9a9fae;
  border-radius: 5px;
  color: #4e525c;
  font-size: 12px;
  line-height: 20px;
  padding-left: 5px;
  font-family: "Liberation Sans", sans-serif;
  &::after {
    content: '';
    position: absolute;
    right: 5px;
    top: 7px;
    border-left: 5px solid transparent;
    border-right: 5px solid transparent;
    border-top: 6px solid #bfc3cf;
  }
`;
const Nav = styled.div`
  position: absolute;
  left: 1410px;
  top: 227px;
  width: 40px;
  height: 259px;
  background: #4e555e;
  border-radius: 4px;
  box-shadow: 1px 1px 2px #14181e;
  display: flex;
  flex-direction: column;
  align-items: center;
  padding-top: 18px;
`;
const NavDot = styled.span<{ $b?: boolean }>`
  position: absolute;
  right: 3px;
  ${(q) => (q.$b ? 'bottom: 3px;' : 'top: 3px;')}
  width: 9px;
  height: 9px;
  border-radius: 50%;
  background: #666d76;
`;
const NavCell = styled.div<{ $h: number; $line?: boolean }>`
  height: ${(q) => q.$h}px;
  width: 100%;
  flex: none;
  display: flex;
  align-items: center;
  justify-content: center;
  ${(q) => (q.$line ? 'border-bottom: 1px solid #5b626b;' : '')}
`;
const Asc = styled.span`
  font-family: "DejaVu Sans Mono", monospace;
  font-size: 14.95px;
  letter-spacing: 0;
`;
const History = styled.div`
  position: absolute;
  left: 454px;
  bottom: 39px;
  display: flex;
  flex-direction: column;
  align-items: flex-start;
  gap: 6px;
`;
const HistLine = styled.div`
  height: 19px;
  padding: 0 2px;
  border-radius: 2px;
  background: rgba(98, 98, 98, .92);
  color: #d2d2d2;
  font-size: 15px;
  line-height: 18px;
  letter-spacing: 1px;
  white-space: pre;
`;
const CmdLine = styled.div`
  position: absolute;
  left: 380px;
  bottom: 0;
  width: 694px;
  height: 34px;
  display: flex;
  border-radius: 2px;
  overflow: hidden;
  border-top: 1px solid #888;
`;
const CmdTools = styled.div`
  width: 67px;
  flex: none;
  background: linear-gradient(90deg, #4c4c4c, #5c5c5c);
  display: flex;
  align-items: center;
  gap: 8px;
  padding-left: 3px;
  color: #f0f0f0;
`;
const CmdClose = styled.span`
  font-size: 17px;
  font-family: "Liberation Sans", sans-serif;
  font-weight: 700;
`;
const CmdGrip = styled.div`
  width: 9px;
  height: 22px;
  background-image: radial-gradient(#ddd 0.8px, transparent 1px);
  background-size: 4px 4px;
`;
const CmdInput = styled.div`
  flex: 1;
  background: #fff;
  display: flex;
  align-items: center;
  padding-left: 8px;
  color: #1a1a1a;
  font-size: 15px;
  letter-spacing: 1px;
  white-space: pre;
  position: relative;
`;
const CmdDrop = styled.div`
  margin: 0 5px 0 -7px;
  flex: none;
`;
const CmdWord = styled.b`
  font-family: "DejaVu Sans Mono", monospace;
  font-size: 14.95px;
  letter-spacing: 0;
  margin-right: 6px;
`;
const Opt = styled.span`
  background: #d0d0d0;
  border-radius: 4px;
  padding: 1px 1px;
  margin: 0 -1px;
`;
const OptKey = styled.span`
  color: #1c3fd0;
`;
const CmdUp = styled.div`
  position: absolute;
  right: 7px;
  top: 13px;
  border-left: 5px solid transparent;
  border-right: 5px solid transparent;
  border-bottom: 6px solid #222;
`;
const Dyn = styled.div`
  position: absolute;
  left: 794px;
  top: 435px;
  display: flex;
  gap: 3px;
  height: 29px;
  font-size: 15px;
  color: #161616;
`;
const DynBox = styled.div<{ $w: number; $white?: boolean }>`
  width: ${(q) => q.$w}px;
  height: 29px;
  background: ${(q) => (q.$white ? '#fff' : '#999')};
  border: 1px solid #000;
  padding-left: ${(q) => (q.$white ? 3 : 4)}px;
  display: flex;
  align-items: center;
  position: relative;
`;
const DynPick = styled.div`
  position: absolute;
  right: 4px;
  top: 10px;
  width: 13px;
  height: 13px;
  background: #ddd;
  border: 1px solid #2222a8;
  border-width: 1px 2px 2px 1px;
  color: #111;
  font-size: 10px;
  line-height: 9px;
  text-align: center;
`;
const Sel = styled.span`
  background: #0078d7;
  color: #fff;
  font-family: "Open Sans", sans-serif;
  font-size: 15.5px;
  line-height: 19px;
`;
const Angle = styled.span`
  font-family: "Open Sans", sans-serif;
  font-size: 15.5px;
  padding-left: 1px;
`;
const Bottom = styled.div`
  height: 24px;
  flex: none;
  background: #3a3a3a;
  border-top: 1px solid #5a5a5a;
  display: flex;
  padding-left: 15px;
  gap: 2px;
`;
const LayoutTab = styled.div<{ $w: number; $on?: boolean }>`
  width: ${(q) => q.$w}px;
  height: 22px;
  flex: none;
  border-radius: 2px 2px 14px 14px / 2px 2px 22px 22px;
  background: ${(q) => (q.$on ? 'linear-gradient(#555,#777)' : '#535353')};
  color: ${(q) => (q.$on ? '#fff' : '#adadad')};
  font-weight: ${(q) => (q.$on ? 700 : 400)};
  font-size: 14.5px;
  text-align: center;
  line-height: 21px;
`;
const LayoutAdd = styled.div`
  width: 28px;
  height: 21px;
  margin-left: 3px;
  border-radius: 10px 4px 10px 4px;
  background: #555;
  color: #bbb;
  font-size: 18px;
  font-weight: 700;
  line-height: 20px;
  text-align: center;
`;
const StatusBar = styled.footer`
  height: 35px;
  flex: none;
  background: #3a3a3a;
  display: flex;
  justify-content: flex-end;
  align-items: flex-start;
  gap: 1px;
  padding-top: 1px;
  overflow: hidden;
`;
const Seg = styled.div<{ $w: number }>`
  width: ${(q) => q.$w}px;
  height: 34px;
  flex: none;
  display: flex;
  align-items: center;
  background: #434343;
  border: 1px solid #656565;
  border-bottom: 0;
`;
const SCell = styled.div<{ $w: number }>`
  width: ${(q) => q.$w}px;
  height: 100%;
  flex: none;
  display: flex;
  align-items: center;
  justify-content: center;
  color: #f2f2f2;
  font-size: 15px;
`;

type Row = (string | [string, number])[];
const hCells = (items: Row, def = 29) =>
  items.map((it, i) => {
    if (it === '|') return <HSep key={i} />;
    const [name, w] = typeof it === 'string' ? [it, def] : it;
    return (
      <Cell key={i} $w={w}>
        <Ic name={name} s={name === 'dd' ? 14 : 24} />
      </Cell>
    );
  });
const ToolV = ({ items, ch = 28, w = 31 }: { items: string[]; ch?: number; w?: number }) => (
  <VBar $w={w} $ch={ch}>
    <VGrip />
    {items.map((it, i) =>
      it === '|' ? (
        <VSep key={i} />
      ) : (
        <VCell key={i}>
          <Ic name={it} s={25} />
        </VCell>
      ),
    )}
  </VBar>
);

const menu: [string, string][] = [
  ['文件', 'F'], ['编辑', 'E'], ['视图', 'V'], ['插入', 'I'], ['格式', 'O'], ['工具', 'T'],
  ['绘图', 'D'], ['标注', 'N'], ['修改', 'M'], ['参数', 'P'], ['窗口', 'W'], ['帮助', 'H'],
];

const Chev = () => <ChevronDown size={15} color="#b5b5b5" strokeWidth={1} />;

export default function App() {
  return (
    <Page>
      <Global />
      <AppBtn>
        <svg width="47" height="48" viewBox="0 0 47 48">
          <defs>
            <linearGradient id="ared" x1="0" y1="0" x2="0" y2="1">
              <stop offset="0" stopColor="#e5312e" />
              <stop offset="1" stopColor="#96181a" />
            </linearGradient>
          </defs>
          <path d="M3 36 15 2h10l8 34h-7l-2-9H14l-3 9zM16 21h7l-3-13z" fill="url(#ared)" fillRule="evenodd" />
          <path d="M36 27h8l-4 5z" fill="#222" />
        </svg>
      </AppBtn>
      <TitleBar>
        <Strip $w={267} $pl={48}>
          <QSlot $w={22} $ml={10}><Ic name="new" s={23} /></QSlot>
          <QSlot $w={29}><Ic name="open" s={23} /></QSlot>
          <QSlot $w={30}><Ic name="save" s={23} /></QSlot>
          <QSlot $w={29}><Ic name="saveas" s={23} /></QSlot>
          <QSlot $w={31}><Ic name="print" s={23} /></QSlot>
          <QSlot $w={29}><Ic name="undod" s={23} /></QSlot>
          <QSlot $w={18}><Ic name="ddl" s={12} /></QSlot>
          <QSlot $w={25}><Ic name="redod" s={23} /></QSlot>
          <QSlot $w={20}><Ic name="ddl" s={12} /></QSlot>
          <QSlot $w={18}><Ic name="qmenu" s={16} /></QSlot>
        </Strip>
        <Title>
          <span>Autodesk AutoCAD 2018</span>
          <span>Drawing1.dwg</span>
        </Title>
        <Strip $w={557} $pl={0}>
          <ArrowR />
          <SearchBox>键入关键字或短语</SearchBox>
          <QSlot $w={28} $ml={1}><Ic name="binoc" s={24} /></QSlot>
          <QSlot $w={30}><Ic name="user" s={24} /></QSlot>
          <Login>登录</Login>
          <QSlot $w={14}><Ic name="ddl" s={12} /></QSlot>
          <QSlot $w={38}><Ic name="cart" s={24} /></QSlot>
          <QSlot $w={26}><Ic name="a360" s={24} /></QSlot>
          <QSlot $w={14}><Ic name="ddl" s={12} /></QSlot>
          <VLine />
          <QSlot $w={42}><Ic name="helpC" s={24} /></QSlot>
          <QSlot $w={6}><Ic name="ddl" s={12} /></QSlot>
        </Strip>
        <WinBtns>
          <svg width="12" height="12"><path d="M0 6h12" stroke="#999" /></svg>
          <svg width="12" height="14"><rect x=".5" y=".5" width="11" height="13" fill="none" stroke="#999" /></svg>
          <svg width="14" height="16"><path d="M1 1l12 14M13 1L1 15" stroke="#999" fill="none" /></svg>
        </WinBtns>
      </TitleBar>
      <MenuBar>
        {menu.map(([a, b]) => (
          <span key={a}>{a}(<Under>{b}</Under>)</span>
        ))}
        <MdiBtns>
          <svg width="13" height="14"><path d="M1 11h11" stroke="#ddd" strokeWidth="2" /></svg>
          <svg width="15" height="16"><rect x="1.5" y="5.5" width="9" height="9" fill="none" stroke="#ddd" strokeWidth="1.2" /><path d="M5 5V2h8v8h-2" fill="none" stroke="#ddd" strokeWidth="1.2" /></svg>
          <svg width="13" height="14"><path d="M2 3l9 9M11 3l-9 9" stroke="#ddd" strokeWidth="2" /></svg>
        </MdiBtns>
      </MenuBar>
      <TabsBar>
        <DocTab $w={153}>开始</DocTab>
        <DocTab $w={160} $on>
          <span>Drawing1*</span>
          <CloseX>×</CloseX>
        </DocTab>
        <AddTab>+</AddTab>
      </TabsBar>
      <BarRow $h={35} $pt={4}>
        <HBar $w={801} $h={30}>
          <HGrip />
          {hCells([
            'new', 'open', 'save', '|', 'print', 'preview', 'plot', 'pub3d', '|', 'cut', 'copy', 'paste', 'match', 'block', '|',
            ['undo', 25], ['dd', 21], ['redo', 25], ['dd', 20], '|', 'hand', 'zrt', 'zwin', 'zprev', '|',
            'palette', 'dc', 'tp', 'sheet', 'markup', 'calc', '|', 'help',
          ])}
        </HBar>
        <HBar $w={745} $h={30}>
          <HGrip />
          <Cell $w={30}><Ic name="styA" /></Cell>
          <Combo $w={150} $pl={24}>Standard<Chev /></Combo>
          <HSep />
          <Cell $w={29}><Ic name="styD" /></Cell>
          <Combo $w={150} $pl={24}>ISO-25<Chev /></Combo>
          <HSep />
          <Cell $w={29}><Ic name="styT" /></Cell>
          <Combo $w={150} $pl={7}>Standard<Chev /></Combo>
          <HSep />
          <Cell $w={29}><Ic name="styM" /></Cell>
          <Combo $w={150} $pl={24}>Standard<Chev /></Combo>
        </HBar>
      </BarRow>
      <BarRow $h={36} $pt={2}>
        <HBar $w={194} $h={30}>
          <HGrip />
          {hCells(['area', '|', 'hide', 'shade', 'sblue', 'sgold', '|', 'smat'])}
        </HBar>
        <HBar $w={588} $h={30}>
          <HGrip />
          {hCells(['vmat', '|', 'c1', 'c2', 'c3', 'c4', 'c5', 'c6', '|', 'd1', 'd2', 'd3', 'd4', '|', 'cam', '|', ['prevv', 31]])}
          <Combo $w={175} $pl={4}><Chev /></Combo>
        </HBar>
        <HBar $w={497} $h={30}>
          <HGrip />
          <Cell $w={28}><Ic name="layP" /></Cell>
          <Combo $w={374} $pl={2}>
            <Ic name="bulb" s={22} />
            <Ic name="sun" s={22} />
            <Ic name="vpf" s={22} />
            <Ic name="lock" s={22} />
            <Swatch />
            <LayerName>轮廓线</LayerName>
            <Chev />
          </Combo>
          {hCells([['layC', 30], ['layU', 30], ['layS', 27]])}
        </HBar>
        <HBar $w={199} $h={30}>
          <HGrip />
          <Cell $w={2} />
          <Combo $w={187} $pl={5} $mono $fs={13}>
            <Swatch /><Mono>ByLayer</Mono><Chev />
          </Combo>
        </HBar>
        <HBar $h={30}>
          <Cell $w={2} />
          <Combo $w={100} $pl={0} $mono $fs={13}><LineSample /><Mono> ByLayer</Mono></Combo>
        </HBar>
      </BarRow>
      <Main>
        <Dock $pl={0}>
          <ToolV w={29} ch={27.9} items={['line', 'xline', 'pline', 'polygon', 'rect', 'arc', 'circle', 'cloud', 'spline', 'ell', 'ella', 'ins', 'mkblk', 'point', 'hatch', 'grad', 'region', 'table', 'textA', 'addsel']} />
          <ToolV items={['dlin', 'dali', 'darc', 'dord', '|', 'drad', 'djog', 'ddia', 'dang', '|', 'dqk', 'dbase', 'dcont', 'dspace', 'dbrk', '|', 'dtol', 'dcen', 'dchk', 'djl', '|', 'dedit', 'dtxt', 'dup', '|', 'dsty']} />
        </Dock>
        <Canvas>
          <Drawing viewBox="68 166 1454 740" preserveAspectRatio="none">
            <path d="M117 166v740M555 166v740M993 166v740M1431 166v740M68 289h1454M68 728h1454" fill="none" stroke="#29303a" strokeWidth="1" />
            <text transform="translate(915 299) rotate(-31.5)" fontFamily="Liberation Sans" fontSize="155" fill="#fff">R5</text>
            <path d="M502 580 1115 212" stroke="#fff" strokeWidth="3" />
            <path d="M693 465 795 382 814 418z" fill="#fff" />
            <circle cx="845.5" cy="583" r="219.5" fill="none" stroke="#fff" strokeWidth="3" />
            <text x="414" y="748" fontFamily="Roboto" fontSize="156" fill="#fff" stroke="#fff" strokeWidth="1.4">1<tspan dx="-7">0</tspan></text>
            <path d="M283.5 603v230M721 603v230" stroke="#eee" strokeWidth="3" />
            <path d="M416 776h174" stroke="#fff" strokeWidth="3" />
            <path d="M285 776 416 755v44zM720 776 590 755v44z" fill="#fff" />
            <circle cx="503" cy="580.5" r="219" fill="none" stroke="#3a63a8" strokeWidth="6" />
            <circle cx="503" cy="580.5" r="219" fill="none" stroke="#c2d6fb" strokeWidth="3" />
            <g stroke="#e8e8e8" fill="none" strokeWidth="1.4">
              <path d="M86.5 824v62h62.5" />
              <rect x="81.5" y="880.5" width="11" height="11" />
              <path d="M153 870l15 15M168 870l-15 15M88 805l7.5 8 7.5-8M95.5 813v8" />
            </g>
          </Drawing>
          <ViewLabel>[-][俯视][二维线框]</ViewLabel>
          <Cube>
            <Ring />
            <Face><FaceIn>上</FaceIn></Face>
            <Compass $x={77} $y={12}>北</Compass>
            <Compass $x={77} $y={129}>南</Compass>
            <Compass $x={20} $y={70}>西</Compass>
            <Compass $x={135} $y={70}>东</Compass>
            <Wcs>WCS</Wcs>
          </Cube>
          <Nav>
            <NavDot />
            <NavCell $h={36}><Ic name="wheel" s={30} /></NavCell>
            <NavCell $h={16} $line><Ic name="ddN" s={10} /></NavCell>
            <NavCell $h={38}><Ic name="handN" s={32} /></NavCell>
            <NavCell $h={36}><Ic name="zoomN" s={30} /></NavCell>
            <NavCell $h={12}><Ic name="ddN" s={10} /></NavCell>
            <NavCell $h={36}><Ic name="orbitN" s={28} /></NavCell>
            <NavCell $h={12} $line><Ic name="ddN" s={10} /></NavCell>
            <NavCell $h={38}><Ic name="showN" s={30} /></NavCell>
            <NavDot $b />
          </Nav>
          <Dyn>
            <DynBox $w={154}>
              指定第二个点或
              <DynPick>±</DynPick>
            </DynBox>
            <DynBox $w={67} $white><Sel>7.8424</Sel></DynBox>
            <DynBox $w={66}><Angle>&lt; 359°</Angle></DynBox>
          </Dyn>
          <History>
            <HistLine>选择对象<Asc>:</Asc></HistLine>
            <HistLine>当前设置<Asc>:  </Asc>复制模式<Asc> = </Asc>多个</HistLine>
            <HistLine>指定基点或<Asc> [</Asc>位移<Asc>(D)/</Asc>模式<Asc>(O)] &lt;</Asc>位移<Asc>&gt;:</Asc></HistLine>
          </History>
          <CmdLine>
            <CmdTools>
              <CmdGrip />
              <CmdClose>X</CmdClose>
              <Ic name="tool" s={20} />
            </CmdTools>
            <CmdInput>
              <Ic name="cmdic" s={24} />
              <CmdDrop><Ic name="ddk" s={14} /></CmdDrop>
              <CmdWord>COPY</CmdWord>
              <span>指定第二个点或<Asc> [</Asc><Opt>阵列<Asc>(<OptKey>A</OptKey>)</Asc></Opt><Asc>] &lt;</Asc>使用第一个点作为位移<Asc>&gt;:</Asc></span>
              <CmdUp />
            </CmdInput>
          </CmdLine>
        </Canvas>
        <Dock $pl={5}>
          <VStack>
            <ToolV w={31} ch={27.8} items={['erase', 'cpy', 'mir', 'off', 'arr', 'move', 'rot', 'scl', 'stretch', 'trim', 'ext', 'brkp', 'brk', 'join', 'chf', 'fil', 'bld', 'expl']} />
            <ToolV w={31} ch={28} items={['o1', 'o2', 'o3', 'o4', '|', 'o5', 'o6']} />
          </VStack>
          <ToolV w={30} ch={28} items={['s1', 's2', '|', 's3', 's4', 's5', 's6', 's7', '|', 's8', 's9', 's10', '|', 's11', 's12', 's13', 's14', '|', 's15', 's16', '|', 's17']} />
        </Dock>
      </Main>
      <Bottom>
        <LayoutTab $w={56} $on>模型</LayoutTab>
        <LayoutTab $w={68}>布局1</LayoutTab>
        <LayoutTab $w={68}>布局2</LayoutTab>
        <LayoutAdd>+</LayoutAdd>
      </Bottom>
      <StatusBar>
        <Seg $w={36}><SCell $w={34}>模型</SCell></Seg>
        <Seg $w={80}><SCell $w={28}><Ic name="gridS" s={22} /></SCell><SCell $w={29}><Ic name="dots" s={22} /></SCell><SCell $w={21}><Ic name="ddw" s={11} /></SCell></Seg>
        <Seg $w={31}><SCell $w={29}><Ic name="inferS" s={22} /></SCell></Seg>
        <Seg $w={130}>
          <SCell $w={31}><Ic name="ortho" s={22} /></SCell><SCell $w={31}><Ic name="polar" s={22} /></SCell><SCell $w={16}><Ic name="ddw" s={11} /></SCell>
          <SCell $w={33}><Ic name="iso" s={22} /></SCell><SCell $w={17}><Ic name="ddw" s={11} /></SCell>
        </Seg>
        <Seg $w={79}>
          <SCell $w={30}><Ic name="angle" s={22} /></SCell><SCell $w={30}><Ic name="osnap" s={22} /></SCell><SCell $w={17}><Ic name="ddw" s={11} /></SCell>
        </Seg>
        <Seg $w={30}><SCell $w={28}><Ic name="lw" s={22} /></SCell></Seg>
        <Seg $w={132}>
          <SCell $w={32}><Ic name="annoS" s={22} /></SCell><SCell $w={30}><Ic name="anno" s={22} /></SCell><SCell $w={28}><Ic name="annoB" s={22} /></SCell>
          <SCell $w={24}>1:1</SCell><SCell $w={16}><Ic name="ddw" s={11} /></SCell>
        </Seg>
        <Seg $w={50}><SCell $w={30}><Ic name="gear" s={18} /></SCell><SCell $w={18}><Ic name="ddw" s={11} /></SCell></Seg>
        <Seg $w={32}><SCell $w={30}><Ic name="plus" s={19} /></SCell></Seg>
        <Seg $w={32}><SCell $w={30}><Ic name="shapes" s={22} /></SCell></Seg>
        <Seg $w={32}><SCell $w={30}><Ic name="iso2" s={22} /></SCell></Seg>
        <Seg $w={30}><SCell $w={28}><Ic name="clean" s={22} /></SCell></Seg>
        <Seg $w={52}><SCell $w={32}><Ic name="full" s={22} /></SCell><SCell $w={20}><Ic name="menu" s={18} /></SCell></Seg>
      </StatusBar>
    </Page>
  );
}
